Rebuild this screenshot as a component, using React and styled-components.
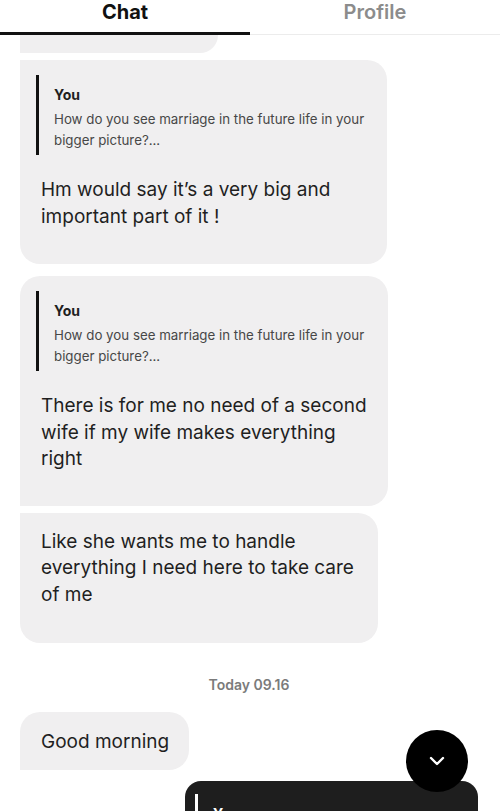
import React from "react";
import styled, { createGlobalStyle } from "styled-components";

const GlobalStyle = createGlobalStyle`
  html, body { margin: 0; padding: 0; background: #fff; }
  body { font-family: Inter, "Noto Sans", "Liberation Sans", sans-serif; color: #1c1c1c; }
  * { box-sizing: border-box; }
`;

const Screen = styled.div`
  position: relative;
  width: 500px;
  height: 811px;
  overflow: hidden;
  background: #fff;
  display: flex;
  flex-direction: column;
`;

const Tabs = styled.div`
  display: flex;
  flex: none;
`;

const Tab = styled.div`
  flex: 1;
  height: 35px;
  display: flex;
  justify-content: center;
  align-items: flex-start;
  font-size: 20px;
  line-height: 24px;
  font-weight: ${(p) => (p.$active ? 700 : 600)};
  color: ${(p) => (p.$active ? "#111" : "#8c8c8c")};
  border-bottom: ${(p) => (p.$active ? "3px solid #111" : "1px solid #ececec")};
`;

const Thread = styled.div`
  display: flex;
  flex-direction: column;
  align-items: flex-start;
  padding: 0 22px 0 20px;
`;

const Bubble = styled.div`
  margin-top: ${(p) => p.$gap || 0}px;
  max-width: ${(p) => p.$max || 367}px;
  background: ${(p) => (p.$mine ? "#1e1e1e" : "#f0eff0")};
  color: ${(p) => (p.$mine ? "#fff" : "#1f1f1f")};
  align-self: ${(p) => (p.$mine ? "flex-end" : "flex-start")};
  border-radius: ${(p) => p.$radius || "20px"};
  padding: ${(p) => p.$pad || "16px 20px 33px 21px"};
`;

const Stub = styled.div`
  width: 198px;
  height: 18px;
  background: #f0eff0;
  border-radius: 0 0 20px 0;
`;

const Quote = styled.div`
  margin-left: -5px;
  margin-bottom: 22px;
  border-left: 3px solid ${(p) => (p.$light ? "#fff" : "#111")};
  padding: 10px 0 4px 15px;
`;

const QuoteAuthor = styled.div`
  font-size: 14px;
  line-height: 20px;
  font-weight: 700;
  margin-bottom: 4px;
`;

const QuoteText = styled.div`
  font-size: 13.3px;
  line-height: 21px;
  color: #474747;
`;

const Text = styled.div`
  font-size: 19px;
  line-height: 26.5px;
  font-weight: 400;
`;

const Stamp = styled.div`
  align-self: center;
  margin-top: 32px;
  font-size: 14px;
  line-height: 20px;
  font-weight: 600;
  color: #7b7b7b;
`;

const ScrollButton = styled.button`
  position: absolute;
  right: 32px;
  bottom: 19px;
  width: 62px;
  height: 62px;
  border-radius: 50%;
  border: none;
  background: #000;
  display: flex;
  align-items: center;
  justify-content: center;
  padding: 0;
`;

const question = "How do you see marriage in the future life in your bigger picture?...";

export default function App() {
  return (
    <Screen>
      <GlobalStyle />
      <Tabs>
        <Tab $active>Chat</Tab>
        <Tab>Profile</Tab>
      </Tabs>
      <Thread>
        <Stub />
        <Bubble $gap={7} $radius="0 20px 20px 20px" $pad="15px 20px 34px 21px">
          <Quote>
            <QuoteAuthor>You</QuoteAuthor>
            <QuoteText>{question}</QuoteText>
          </Quote>
          <Text>Hm would say it’s a very big and important part of it !</Text>
        </Bubble>
        <Bubble $gap={12} $max={368} $radius="20px 20px 20px 0" $pad="15px 19px 33px 21px">
          <Quote>
            <QuoteAuthor>You</QuoteAuthor>
            <QuoteText>{question}</QuoteText>
          </Quote>
          <Text>There is for me no need of a second wife if my wife makes everything right</Text>
        </Bubble>
        <Bubble $gap={7} $radius="0 20px 20px 20px" $pad="16px 20px 35px 21px" $max={358}>
          <Text>Like she wants me to handle everything I need here to take care of me</Text>
        </Bubble>
        <Stamp>Today 09.16</Stamp>
        <Bubble $gap={17} $radius="20px 20px 20px 0" $pad="17px 20px 14px 21px">
          <Text>Good morning</Text>
        </Bubble>
        <Bubble $gap={11} $mine $max={293} $radius="16px 16px 0 0" $pad="13px 20px 30px 15px" style={{ width: 293 }}>
          <Quote $light>
            <QuoteAuthor>You</QuoteAuthor>
          </Quote>
        </Bubble>
      </Thread>
      <ScrollButton aria-label="Scroll to latest">
        <svg width="16" height="10" viewBox="0 0 16 10" fill="none">
          <path d="M2 2l6 6 6-6" stroke="#fff" strokeWidth="2.4" strokeLinecap="round" strokeLinejoin="round" />
        </svg>
      </ScrollButton>
    </Screen>
  );
}
